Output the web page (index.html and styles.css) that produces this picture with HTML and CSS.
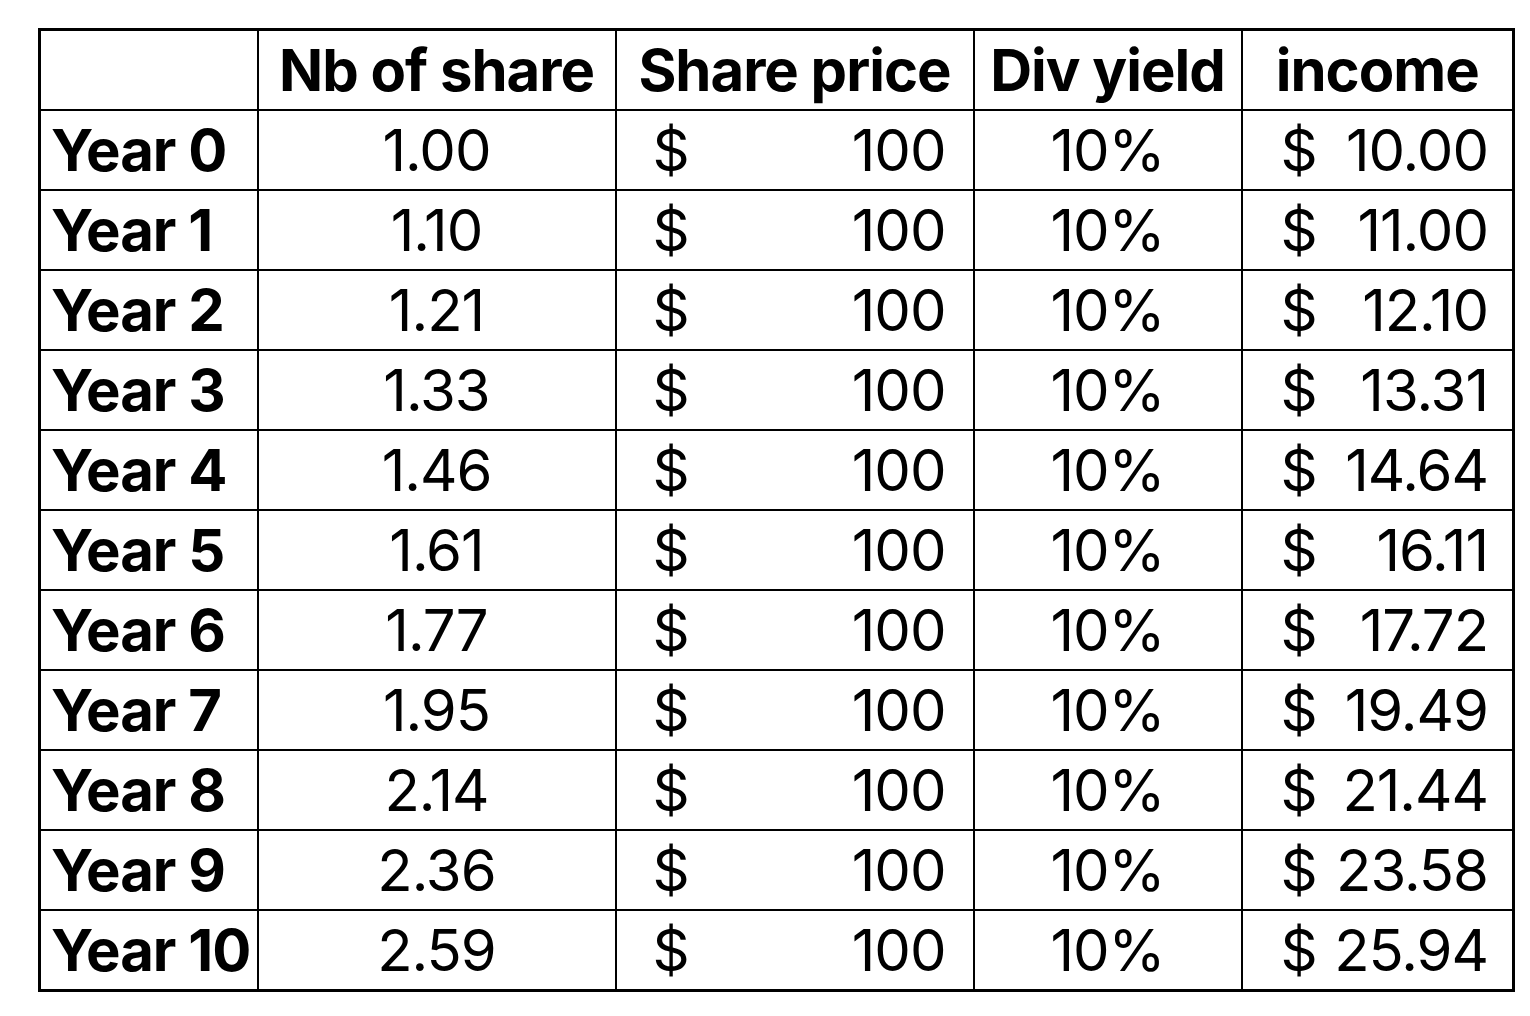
FILE: index.html
```html
<!DOCTYPE html>
<html>
<head>
<meta charset="utf-8">
<link rel="stylesheet" href="styles.css">
</head>
<body>
<table class="grid">
  <colgroup>
    <col class="c-label">
    <col class="c-nb">
    <col class="c-price">
    <col class="c-yield">
    <col class="c-income">
  </colgroup>
  <thead>
    <tr>
      <th></th>
      <th>Nb of share</th>
      <th>Share price</th>
      <th>Div yield</th>
      <th>income</th>
    </tr>
  </thead>
  <tbody>
    <tr><th class="label">Year 0</th><td class="num">1.00</td><td><div class="acct price"><span>$</span><span>100</span></div></td><td class="num">10%</td><td><div class="acct inc"><span>$</span><span>10.00</span></div></td></tr>
    <tr><th class="label">Year 1</th><td class="num">1.10</td><td><div class="acct price"><span>$</span><span>100</span></div></td><td class="num">10%</td><td><div class="acct inc"><span>$</span><span>11.00</span></div></td></tr>
    <tr><th class="label">Year 2</th><td class="num">1.21</td><td><div class="acct price"><span>$</span><span>100</span></div></td><td class="num">10%</td><td><div class="acct inc"><span>$</span><span>12.10</span></div></td></tr>
    <tr><th class="label">Year 3</th><td class="num">1.33</td><td><div class="acct price"><span>$</span><span>100</span></div></td><td class="num">10%</td><td><div class="acct inc"><span>$</span><span>13.31</span></div></td></tr>
    <tr><th class="label">Year 4</th><td class="num">1.46</td><td><div class="acct price"><span>$</span><span>100</span></div></td><td class="num">10%</td><td><div class="acct inc"><span>$</span><span>14.64</span></div></td></tr>
    <tr><th class="label">Year 5</th><td class="num">1.61</td><td><div class="acct price"><span>$</span><span>100</span></div></td><td class="num">10%</td><td><div class="acct inc"><span>$</span><span>16.11</span></div></td></tr>
    <tr><th class="label">Year 6</th><td class="num">1.77</td><td><div class="acct price"><span>$</span><span>100</span></div></td><td class="num">10%</td><td><div class="acct inc"><span>$</span><span>17.72</span></div></td></tr>
    <tr><th class="label">Year 7</th><td class="num">1.95</td><td><div class="acct price"><span>$</span><span>100</span></div></td><td class="num">10%</td><td><div class="acct inc"><span>$</span><span>19.49</span></div></td></tr>
    <tr><th class="label">Year 8</th><td class="num">2.14</td><td><div class="acct price"><span>$</span><span>100</span></div></td><td class="num">10%</td><td><div class="acct inc"><span>$</span><span>21.44</span></div></td></tr>
    <tr><th class="label">Year 9</th><td class="num">2.36</td><td><div class="acct price"><span>$</span><span>100</span></div></td><td class="num">10%</td><td><div class="acct inc"><span>$</span><span>23.58</span></div></td></tr>
    <tr><th class="label">Year 10</th><td class="num">2.59</td><td><div class="acct price"><span>$</span><span>100</span></div></td><td class="num">10%</td><td><div class="acct inc"><span>$</span><span>25.94</span></div></td></tr>
  </tbody>
</table>
</body>
</html>
```
FILE: styles.css
```css
html, body {
  margin: 0;
  padding: 0;
  background: #ffffff;
}
body {
  padding: 28px 0 0 38px;
  font-family: Inter, Roboto, "Liberation Sans", sans-serif;
  color: #000;
}
.grid {
  border-collapse: collapse;
  table-layout: fixed;
  width: 1476px;
  border: 3px solid #000;
}
.c-label { width: 218px; }
.c-nb { width: 358px; }
.c-price { width: 358px; }
.c-yield { width: 268px; }
.c-income { width: 272px; }
.grid th, .grid td {
  border: 2px solid #000;
  height: 78px;
  padding: 0;
  font-size: 58px;
  line-height: 1;
  vertical-align: middle;
  white-space: nowrap;
  overflow: hidden;
}
.grid thead th {
  font-weight: 700;
  text-align: center;
  letter-spacing: -1px;
}
.grid th.label {
  font-weight: 700;
  text-align: left;
  padding-left: 10px;
  letter-spacing: -1px;
}
.grid td {
  font-weight: 400;
  letter-spacing: -1px;
  font-variant-numeric: proportional-nums;
}
.num {
  text-align: center;
}
.acct {
  display: flex;
  justify-content: space-between;
}
.acct.price {
  padding: 0 27px 0 36px;
}
.acct.inc {
  padding: 0 24px 0 38px;
}
```
